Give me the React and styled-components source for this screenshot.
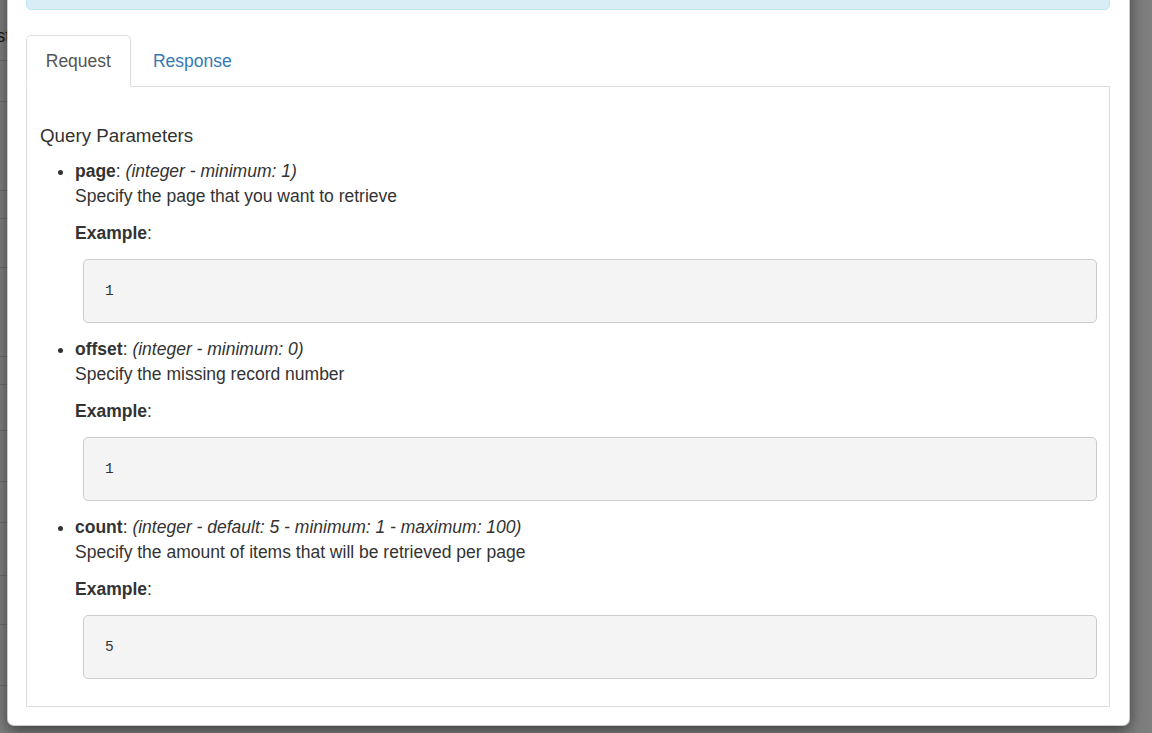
import React from 'react'
import styled, { createGlobalStyle, css } from 'styled-components'

const GlobalStyle = createGlobalStyle`
    html, body {
        margin: 0;
        height: 100%;
        overflow: hidden;
        background: #fff;
        font-family: 'Liberation Sans', Arial, Helvetica, sans-serif;
        color: #333;
    }
`;

// page that sits behind the modal backdrop
const Page = styled.div`
    position: relative;
    height: 733px;
    overflow: hidden;
`;

const BackTable = styled.div`
    display: flex;
    flex-direction: column;
    width: 1100px;
    padding-top: 12px;
`;

const BackRow = styled.div`
    height: ${props => props.h}px;
    border-bottom: 1px solid #ddd;
    font-size: 17.5px;
    line-height: 25px;
    display: flex;
    align-items: center;
`;

const BackLabel = styled.span`
    width: 10px;
    direction: rtl;
    white-space: nowrap;
`;

const Backdrop = styled.div`
    position: absolute;
    inset: 0;
    background: rgba(0, 0, 0, 0.5);
`;

const Dialog = styled.div`
    position: absolute;
    left: 7px;
    top: -69px;
    width: 1123px;
    box-sizing: border-box;
    background: #fff;
    border: 1px solid rgba(0, 0, 0, 0.2);
    border-radius: 7px;
    box-shadow: 0 5px 15px rgba(0, 0, 0, 0.5);
    padding: 18px 19px 18px 18px;
`;

const Alert = styled.div`
    height: 58px;
    margin-bottom: 25px;
    background: #d9edf7;
    border: 1px solid #bce8f1;
    border-radius: 5px;
`;

const TabNav = styled.ul`
    display: flex;
    list-style: none;
    margin: 0;
    padding: 0;
    border-bottom: 1px solid #ddd;
`;

const Tab = styled.li`
    margin-bottom: -1px;
    margin-right: 2.5px;
    padding: 12.5px 18.75px;
    font-size: 17.5px;
    line-height: 25px;
    border: 1px solid transparent;
    border-radius: 5px 5px 0 0;
    color: #337ab7;
    cursor: pointer;

    ${props => props.active && css`
        color: #555;
        background: #fff;
        border-color: #ddd;
        border-bottom-color: transparent;
        cursor: default;
    `}
`;

const TabPanel = styled.div`
    border: 1px solid #ddd;
    border-top: none;
    padding: 12.5px 12.5px 14.5px 13px;
`;

const Heading = styled.h4`
    margin: 26px 0 11.5px;
    font-size: 18.75px;
    font-weight: 500;
    line-height: 20px;
`;

const ParamList = styled.ul`
    margin: 0;
    padding-left: 35px;
    font-size: 17.5px;
    line-height: 25px;

    li { padding-top: 2px; }
`;

const ParamName = styled.div`
    strong { font-weight: 700; }
    em { font-style: italic; }
`;

const Example = styled.p`
    margin: 12px 0 12.5px;
`;

const Pre = styled.pre`
    margin: 0 0 12.5px 8px;
    padding: 20px 21px;
    background: #f4f4f4;
    border: 1px solid #ccc;
    border-radius: 5px;
    font-family: 'Liberation Mono', 'Courier New', monospace;
    font-size: 14.5px;
    line-height: 22px;
    color: #333;
`;

const params = [
    { name: 'page', type: '(integer - minimum: 1)', desc: 'Specify the page that you want to retrieve', example: '1' },
    { name: 'offset', type: '(integer - minimum: 0)', desc: 'Specify the missing record number', example: '1' },
    { name: 'count', type: '(integer - default: 5 - minimum: 1 - maximum: 100)', desc: 'Specify the amount of items that will be retrieved per page', example: '5' },
]

const backRows = [48, 40, 88, 27, 48, 88, 27, 45, 50, 40, 52, 48, 60]

export default function App() {
    return (
        <Page>
            <GlobalStyle />
            <BackTable>
                {backRows.map((h, i) => (
                    <BackRow key={i} h={h}>
                        {i === 0 && <BackLabel>Request</BackLabel>}
                    </BackRow>
                ))}
            </BackTable>
            <Backdrop />

            <Dialog>
                <Alert />
                <TabNav>
                    <Tab active>Request</Tab>
                    <Tab>Response</Tab>
                </TabNav>
                <TabPanel>
                    <Heading>Query Parameters</Heading>
                    <ParamList>
                        {params.map(p => (
                            <li key={p.name}>
                                <ParamName>
                                    <strong>{p.name}</strong>: <em>{p.type}</em>
                                </ParamName>
                                <div>{p.desc}</div>
                                <Example><strong>Example</strong>:</Example>
                                <Pre>{p.example}</Pre>
                            </li>
                        ))}
                    </ParamList>
                </TabPanel>
            </Dialog>
        </Page>
    )
}
